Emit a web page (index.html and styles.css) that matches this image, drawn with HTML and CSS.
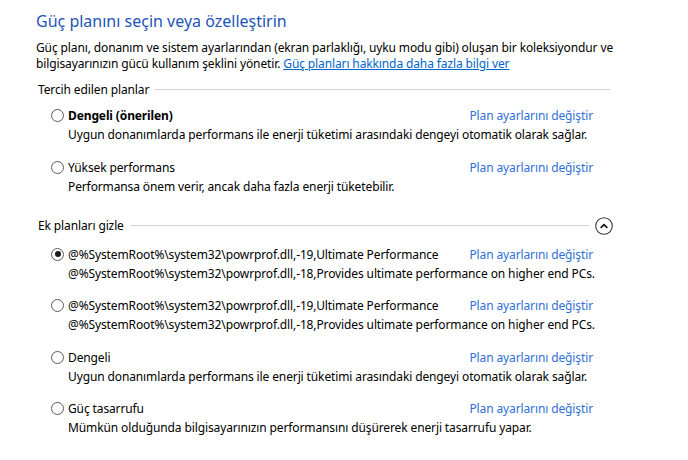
FILE: index.html
```html
<!DOCTYPE html>
<html lang="tr">
<head>
<meta charset="utf-8">
<title>Güç Seçenekleri</title>
<link rel="stylesheet" href="styles.css">
</head>
<body>
<div class="page">
  <h1 class="title">Güç planını seçin veya özelleştirin</h1>
  <p class="intro">Güç planı, donanım ve sistem ayarlarından (ekran parlaklığı, uyku modu gibi) oluşan bir koleksiyondur ve<br>bilgisayarınızın gücü kullanım şeklini yönetir. <a class="intro-link" href="#">Güç planları hakkında daha fazla bilgi ver</a></p>

  <section class="group group-preferred">
    <div class="group-head"><span class="group-label">Tercih edilen planlar</span><span class="rule"></span></div>
    <div class="plan">
      <span class="radio"></span>
      <span class="plan-name bold">Dengeli (önerilen)</span>
      <a class="plan-link" href="#">Plan ayarlarını değiştir</a>
      <span class="plan-desc">Uygun donanımlarda performans ile enerji tüketimi arasındaki dengeyi otomatik olarak sağlar.</span>
    </div>
    <div class="plan">
      <span class="radio"></span>
      <span class="plan-name">Yüksek performans</span>
      <a class="plan-link" href="#">Plan ayarlarını değiştir</a>
      <span class="plan-desc">Performansa önem verir, ancak daha fazla enerji tüketebilir.</span>
    </div>
  </section>

  <section class="group group-extra">
    <div class="group-head"><span class="group-label">Ek planları gizle</span><span class="rule"></span>
      <span class="toggle"><svg width="18" height="18" viewBox="0 0 18 18"><circle cx="9" cy="9" r="8.3" fill="none" stroke="#3a3a3a" stroke-width="1.1"/><path d="M6.2 10.4 L9 7.6 L11.8 10.4" fill="none" stroke="#1a1a1a" stroke-width="1.8" stroke-linecap="round" stroke-linejoin="round"/></svg></span>
    </div>
    <div class="plan">
      <span class="radio checked"></span>
      <span class="plan-name">@%SystemRoot%\system32\powrprof.dll,-19,Ultimate Performance</span>
      <a class="plan-link" href="#">Plan ayarlarını değiştir</a>
      <span class="plan-desc">@%SystemRoot%\system32\powrprof.dll,-18,Provides ultimate performance on higher end PCs.</span>
    </div>
    <div class="plan">
      <span class="radio"></span>
      <span class="plan-name">@%SystemRoot%\system32\powrprof.dll,-19,Ultimate Performance</span>
      <a class="plan-link" href="#">Plan ayarlarını değiştir</a>
      <span class="plan-desc">@%SystemRoot%\system32\powrprof.dll,-18,Provides ultimate performance on higher end PCs.</span>
    </div>
    <div class="plan">
      <span class="radio"></span>
      <span class="plan-name">Dengeli</span>
      <a class="plan-link" href="#">Plan ayarlarını değiştir</a>
      <span class="plan-desc">Uygun donanımlarda performans ile enerji tüketimi arasındaki dengeyi otomatik olarak sağlar.</span>
    </div>
    <div class="plan">
      <span class="radio"></span>
      <span class="plan-name">Güç tasarrufu</span>
      <a class="plan-link" href="#">Plan ayarlarını değiştir</a>
      <span class="plan-desc">Mümkün olduğunda bilgisayarınızın performansını düşürerek enerji tasarrufu yapar.</span>
    </div>
  </section>
</div>
</body>
</html>
```

FILE: styles.css
```css
html, body {
  margin: 0;
  padding: 0;
  background: #ffffff;
}

body {
  font-family: "Segoe UI", "Noto Sans", "Open Sans", sans-serif;
  font-size: 12px;
  letter-spacing: -0.12px;
  color: #000000;
}

.page {
  padding: 11px 0 0 36px;
  width: 590px;
}

.title {
  margin: 0;
  font-size: 16px;
  font-weight: normal;
  letter-spacing: 0;
  line-height: 20px;
  color: #1e54b8;
}

.intro {
  margin: 9px 0 0 0;
  line-height: 16px;
  white-space: nowrap;
}

.intro-link {
  color: #0066cc;
  text-decoration: underline;
}

.group-head {
  display: flex;
  align-items: center;
  margin-left: 2px;
  height: 18px;
}

.group-label {
  white-space: nowrap;
  padding-right: 6px;
}

.rule {
  flex: 1;
  height: 1px;
  background: #d2d2d2;
}

.group-preferred {
  margin-top: 8px;
  width: 574px;
}

.group-preferred .group-head {
  margin-bottom: 8px;
}

.group-extra {
  margin-top: 20px;
  width: 577px;
}

.group-extra .group-head {
  height: 20px;
  margin-bottom: 9px;
}

.toggle {
  display: flex;
  margin-left: 6px;
}

.plan {
  display: grid;
  grid-template-columns: 17px 1fr auto;
  grid-template-rows: 19px 19px;
  align-items: center;
  width: 542px;
  margin-left: 15px;
  margin-bottom: 13.5px;
}

.radio {
  width: 11px;
  height: 11px;
  border: 1px solid #5a5a5a;
  border-radius: 50%;
  position: relative;
  box-sizing: content-box;
}

.radio.checked::after {
  content: "";
  position: absolute;
  left: 2.5px;
  top: 2.5px;
  width: 6px;
  height: 6px;
  border-radius: 50%;
  background: #1a1a1a;
}

.plan-name {
  white-space: nowrap;
}

.bold {
  font-weight: bold;
}

.plan-link {
  color: #2f6fd8;
  text-decoration: none;
  white-space: nowrap;
}

.plan-desc {
  grid-column: 2 / 4;
  white-space: nowrap;
}
```
